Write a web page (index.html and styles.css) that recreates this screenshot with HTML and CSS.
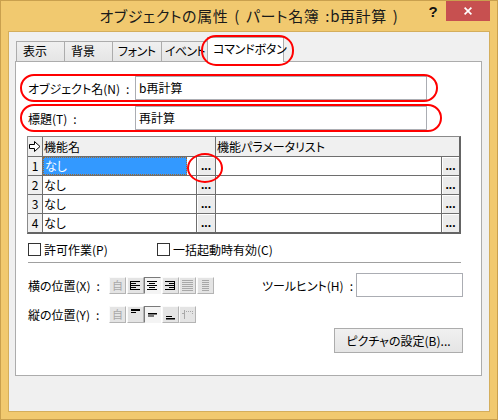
FILE: index.html
```html
<!DOCTYPE html>
<html lang="ja">
<head>
<meta charset="utf-8">
<link rel="stylesheet" href="styles.css">
</head>
<body>
<div class="window">
  <div class="titlebar">
    <div></div>
    <div class="title">オブジェクトの属性 ( パート名簿 :b再計算 )</div>
    <div class="controls">
      <span class="help">?</span>
      <span class="close"><svg width="8" height="8" viewBox="0 0 8 8"><path d="M0.6 0.6L7.4 7.4M7.4 0.6L0.6 7.4" stroke="#fff" stroke-width="1.7"/></svg></span>
    </div>
  </div>
  <div class="client">
    <div class="tabs">
      <div class="tab t1">表示</div>
      <div class="tab t2">背景</div>
      <div class="tab t3">フォント</div>
      <div class="tab t4">イベント</div>
      <div class="tab sel">コマンドボタン<span class="mark mark-tab"></span></div>
    </div>
    <div class="panel">
      <div class="field">
        <span class="flabel">オブジェクト名(N)<span class="colon">:</span></span>
        <div class="input">b再計算</div>
        <span class="mark mark-f1"></span>
      </div>
      <div class="field f2">
        <span class="flabel">標題(T)<span class="colon">:</span></span>
        <div class="input">再計算</div>
        <span class="mark mark-f2"></span>
      </div>

      <div class="grid">
        <div class="h c0"><svg width="12" height="11" viewBox="0 0 12 11"><polygon points="0.5,3.5 5.5,3.5 5.5,0.5 11,5.5 5.5,10.5 5.5,7.5 0.5,7.5" fill="#fff" stroke="#000" stroke-width="1"/></svg></div>
        <div class="h c1">機能名</div>
        <div class="h c2">機能パラメータリスト</div>

        <div class="c0 num">1</div>
        <div class="c1 cell"><span class="name selc">なし</span><span class="dots">...<span class="mark mark-btn"></span></span></div>
        <div class="c2 cell"><span class="name"></span><span class="dots d2">...</span></div>

        <div class="c0 num">2</div>
        <div class="c1 cell"><span class="name">なし</span><span class="dots">...</span></div>
        <div class="c2 cell"><span class="name"></span><span class="dots d2">...</span></div>

        <div class="c0 num">3</div>
        <div class="c1 cell"><span class="name">なし</span><span class="dots">...</span></div>
        <div class="c2 cell"><span class="name"></span><span class="dots d2">...</span></div>

        <div class="c0 num last">4</div>
        <div class="c1 cell last"><span class="name">なし</span><span class="dots">...</span></div>
        <div class="c2 cell last"><span class="name"></span><span class="dots d2">...</span></div>
      </div>

      <div class="checks">
        <div class="check first"><span class="box"></span>許可作業(P)</div>
        <div class="check"><span class="box"></span>一括起動時有効(C)</div>
      </div>

      <div class="sep"></div>

      <div class="pos">
        <span class="plabel">横の位置(X)<span class="colon">:</span></span>
        <div class="btns">
          <span class="ab dis"><span class="ji">自</span></span>
          <span class="ab"><svg width="15" height="15" viewBox="0 0 15 15"><g fill="#000"><rect x="2" y="3" width="1" height="9"/><rect x="2" y="3" width="10" height="1"/><rect x="2" y="5" width="6" height="1"/><rect x="2" y="7" width="10" height="1"/><rect x="2" y="9" width="6" height="1"/><rect x="2" y="11" width="10" height="1"/></g></svg></span>
          <span class="ab on"><svg width="15" height="15" viewBox="0 0 15 15"><g fill="#000"><rect x="2" y="3" width="10" height="1"/><rect x="4" y="5" width="6" height="1"/><rect x="2" y="7" width="10" height="1"/><rect x="4" y="9" width="6" height="1"/><rect x="2" y="11" width="10" height="1"/></g></svg></span>
          <span class="ab"><svg width="15" height="15" viewBox="0 0 15 15"><g fill="#000"><rect x="11" y="3" width="1" height="9"/><rect x="2" y="3" width="10" height="1"/><rect x="6" y="5" width="6" height="1"/><rect x="2" y="7" width="10" height="1"/><rect x="6" y="9" width="6" height="1"/><rect x="2" y="11" width="10" height="1"/></g></svg></span>
          <span class="ab dis"><svg width="15" height="15" viewBox="0 0 15 15"><g fill="#a8a8a8"><rect x="2" y="2" width="11" height="1"/><rect x="2" y="4" width="11" height="1"/><rect x="2" y="6" width="11" height="1"/><rect x="2" y="8" width="11" height="1"/><rect x="2" y="10" width="11" height="1"/><rect x="2" y="12" width="11" height="1"/></g></svg></span>
          <span class="ab dis"><svg width="15" height="15" viewBox="0 0 15 15"><g fill="#a8a8a8"><rect x="4" y="2" width="7" height="1"/><rect x="4" y="4" width="7" height="1"/><rect x="4" y="6" width="7" height="1"/><rect x="4" y="8" width="7" height="1"/><rect x="4" y="10" width="7" height="1"/><rect x="4" y="12" width="7" height="1"/></g></svg></span>
        </div>
        <div class="tip">
          <span class="tlabel">ツールヒント(H)<span class="colon">:</span></span>
          <div class="tinput"></div>
        </div>
      </div>

      <div class="pos pos2">
        <span class="plabel">縦の位置(Y)<span class="colon">:</span></span>
        <div class="btns">
          <span class="ab dis"><span class="ji">自</span></span>
          <span class="ab"><svg width="15" height="15" viewBox="0 0 15 15"><g fill="#000"><rect x="3" y="2" width="9" height="2"/><rect x="3" y="5" width="5" height="1"/></g></svg></span>
          <span class="ab on"><svg width="15" height="15" viewBox="0 0 15 15"><g fill="#000"><rect x="3" y="6" width="9" height="1.5"/><rect x="3" y="8.5" width="6" height="1"/></g></svg></span>
          <span class="ab"><svg width="15" height="15" viewBox="0 0 15 15"><g fill="#000"><rect x="3" y="9" width="6" height="1"/><rect x="3" y="11" width="9" height="1.5"/></g></svg></span>
          <span class="ab dis"><svg width="15" height="15" viewBox="0 0 15 15"><g fill="#a8a8a8"><rect x="4" y="3" width="1" height="9"/><rect x="6" y="4" width="1" height="1"/><rect x="8" y="4" width="1" height="1"/><rect x="10" y="4" width="1" height="1"/><rect x="12" y="4" width="1" height="1"/><rect x="12" y="6" width="1" height="1"/><rect x="2" y="6" width="2" height="1"/></g></svg></span>
        </div>
      </div>

      <div class="picrow">
        <button class="pic">ピクチャの設定(B)...</button>
      </div>
    </div>
  </div>
</div>
</body>
</html>
```

FILE: styles.css
```css
* { box-sizing: border-box; }
html, body { margin: 0; padding: 0; }
body {
  width: 498px;
  height: 420px;
  overflow: hidden;
  font-family: "Noto Sans CJK JP", "Noto Sans", sans-serif;
  font-size: 12px;
  font-feature-settings: "palt";
  color: #000;
  background: #f1c96f;
}
.window {
  width: 498px;
  height: 420px;
  border: 1px solid #c9a04e;
  background: #f1c96f;
  display: flex;
  flex-direction: column;
}
.titlebar {
  height: 30px;
  flex: none;
  display: grid;
  grid-template-columns: 1fr auto 1fr;
  padding: 0 7px;
}
.title {
  align-self: center;
  font-size: 15px;
  line-height: 20px;
  color: #1a1a1a;
  white-space: nowrap;
  letter-spacing: 0.6px;
  word-spacing: 2px;
}
.controls {
  justify-self: end;
  display: flex;
  align-items: flex-start;
}
.help {
  width: 26px;
  height: 20px;
  display: flex;
  align-items: center;
  justify-content: center;
  font-family: "Liberation Sans", sans-serif;
  font-weight: bold;
  font-size: 15px;
  color: #111;
}
.close {
  width: 44px;
  height: 20px;
  background: #c75050;
  display: flex;
  align-items: center;
  justify-content: center;
}
.client {
  flex: 1;
  margin: 0 7px 7px;
  background: #f0f0f0;
  border: 1px solid #d4ae5c;
  padding: 5px 7px 0 6px;
  display: flex;
  flex-direction: column;
}
.tabs {
  display: flex;
  align-items: flex-end;
  margin-left: 1px;
  height: 25px;
  margin-bottom: -1px;
  position: relative;
  z-index: 1;
}
.tab {
  height: 20px;
  margin-bottom: 1px;
  border: 1px solid #acacac;
  border-bottom: none;
  background: linear-gradient(#f0f0f0, #e5e5e5);
  padding-left: 6px;
  line-height: 18px;
  margin-right: -1px;
  white-space: nowrap;
}
.t1 { width: 49px; }
.t2 { width: 49px; }
.t3 { width: 50px; padding-left: 5px; letter-spacing: -0.4px; }
.t4 { width: 47px; padding-left: 3px; letter-spacing: -0.7px; }
.tab.sel {
  width: 77px;
  height: 25px;
  margin-bottom: 0;
  background: #fff;
  line-height: 22px;
  position: relative;
  padding-left: 5px;
  letter-spacing: -0.2px;
}
.panel {
  flex: none;
  height: 315px;
  border: 1px solid #acacac;
  background: #fff;
  padding: 14px 18px 0 12px;
  width: 467px;
}
.colon { margin-left: 6px; }
.field {
  display: flex;
  align-items: center;
  height: 24px;
  position: relative;
}
.f2 { margin-top: 6px; }
.flabel { width: 107px; white-space: nowrap; }
.input {
  width: 292px;
  height: 24px;
  border: 1px solid #abadb3;
  padding-left: 3px;
  line-height: 22px;
}
.mark {
  position: absolute;
  border: 2px solid #ff0000;
  pointer-events: none;
  z-index: 5;
}
.mark-f1 { left: -8px; top: -2px; width: 418px; height: 28px; border-radius: 14px; }
.mark-f2 { left: -8px; top: -2px; width: 422px; height: 28px; border-radius: 14px; }
.mark-tab { left: -7px; top: -3px; width: 93px; height: 31px; border-radius: 15px; }
.mark-btn { left: -10px; top: -4px; width: 36px; height: 30px; border-radius: 50%; }

.grid {
  margin-top: 6px;
  margin-left: -1px;
  width: 434px;
  display: grid;
  grid-template-columns: 15px 173px 243px;
  grid-template-rows: 20px 19px 19px 19px 18px;
  border-top: 1px solid #8a8a8a;
  border-left: 1px solid #8a8a8a;
  border-right: 2px solid #646464;
  border-bottom: 2px solid #646464;
}
.grid > div {
  border-right: 1px solid #6e6e6e;
  border-bottom: 1px solid #6e6e6e;
}
.grid > .c2 { border-right: none; }
.grid > .last { border-bottom: none; }
.h {
  background: #f0f0f0;
  line-height: 19px;
  padding-left: 1px;
  white-space: nowrap;
}
.h.c0 {
  display: flex;
  align-items: center;
  justify-content: center;
  padding-left: 0;
}
.num {
  background: #f0f0f0;
  text-align: center;
  line-height: 18px;
  font-size: 12px;
}
.cell {
  display: flex;
  background: #fff;
}
.name {
  line-height: 18px;
  padding-left: 1px;
  white-space: nowrap;
}
.c1 .name { width: 144px; margin-right: 9px; }
.c2 .name { flex: 1; }
.selc {
  background: #3399ff;
  color: #fff;
  border: 1px dotted #a06a30;
  line-height: 16px;
}
.dots {
  position: relative;
  width: 19px;
  background: #ececec;
  border-left: 1px solid #6e6e6e;
  box-shadow: inset 1px 1px #fff;
  font-family: "Liberation Sans", sans-serif;
  font-weight: bold;
  font-size: 12px;
  text-align: center;
  line-height: 18px;
}
.d2 { width: 18px; }

.checks {
  display: flex;
  align-items: center;
  height: 16px;
  margin-top: 7px;
}
.check {
  display: flex;
  align-items: center;
  gap: 3px;
  white-space: nowrap;
}
.check.first { width: 129px; }
.box {
  width: 13px;
  height: 13px;
  border: 1px solid #333;
  background: #fff;
  flex: none;
}
.sep {
  height: 1px;
  width: 433px;
  background: #a0a0a0;
  margin-top: 5px;
}
.pos {
  display: flex;
  align-items: center;
  height: 24px;
  margin-top: 10px;
}
.pos2 { height: 17px; margin-top: 9px; }
.plabel { width: 81px; white-space: nowrap; }
.btns {
  display: flex;
  gap: 0.5px;
}
.ab {
  width: 17px;
  height: 17px;
  border: 1px solid;
  border-color: #fafafa #b4b4b4 #b4b4b4 #fafafa;
  background: #e4e4e4;
  display: flex;
  align-items: center;
  justify-content: center;
}
.ab.on {
  border-color: #7a7a7a #f4f4f4 #f4f4f4 #7a7a7a;
  background: #f4f4f4;
}
.ji {
  color: #a8a8a8;
  font-size: 11px;
  line-height: 15px;
}
.tip {
  margin-left: auto;
  display: flex;
  align-items: center;
}
.tlabel { width: 94px; white-space: nowrap; }
.tinput {
  width: 107px;
  height: 24px;
  border: 1px solid #abadb3;
  background: #fff;
}
.picrow {
  display: flex;
  justify-content: flex-end;
  margin-top: 5px;
}
.pic {
  width: 129px;
  height: 25px;
  border: 1px solid #acacac;
  background: linear-gradient(#f0f0f0, #e5e5e5);
  font-family: inherit;
  font-size: 12px;
  font-feature-settings: "palt";
  color: #000;
  padding: 0;
  margin: 0;
}
```
